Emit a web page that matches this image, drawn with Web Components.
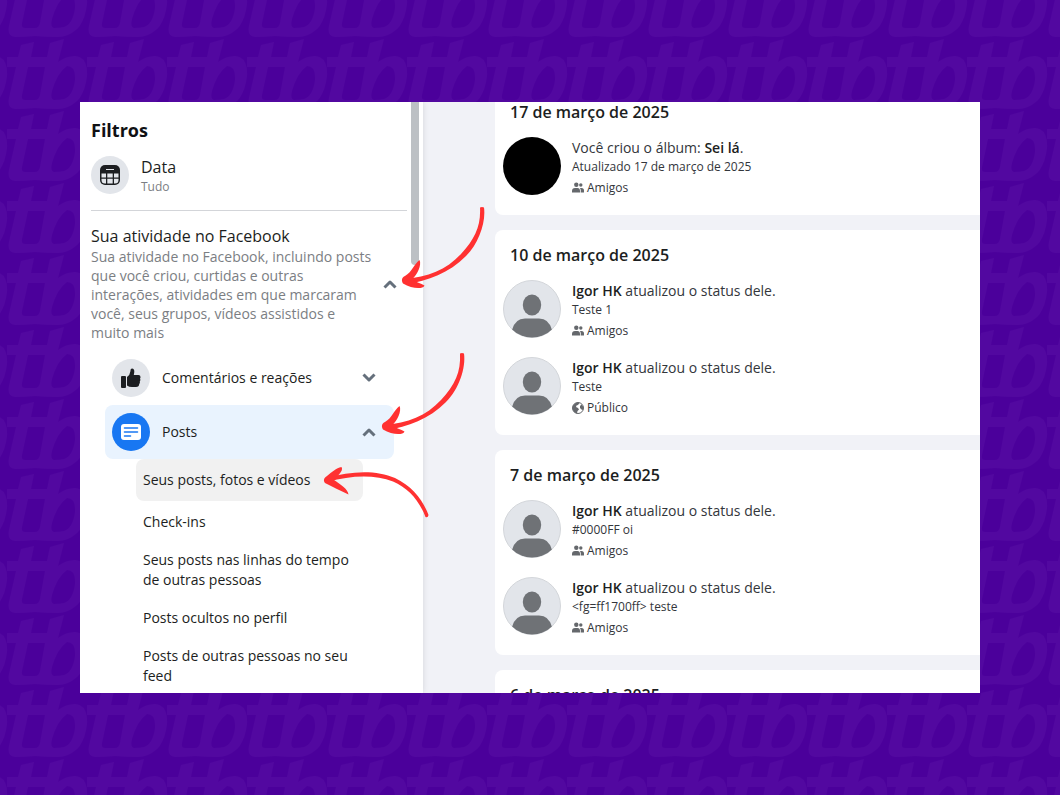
<!DOCTYPE html>
<html lang="pt-BR">
<head>
<meta charset="utf-8">
<meta name="viewport" content="width=device-width, initial-scale=1">
<title>Registro de atividades</title>
<style>
  html, body { margin: 0; height: 100%; }
  body { font-family: "Open Sans", "Noto Sans", sans-serif; color: #1c1e21; background: #4b009b; overflow: hidden; }
</style>
</head>
<body>
<brand-backdrop>
  <activity-window>
    <filter-sidebar slot="side">
      <date-filter label="Data" value="Tudo"></date-filter>
      <filter-section heading="Sua atividade no Facebook" slot="section">
        Sua atividade no Facebook, incluindo posts que você criou, curtidas e outras interações, atividades em que marcaram você, seus grupos, vídeos assistidos e muito mais
      </filter-section>
      <filter-group icon="like" slot="groups">Comentários e reações</filter-group>
      <filter-group icon="post" open slot="groups">Posts</filter-group>
      <filter-link current slot="links">Seus posts, fotos e vídeos</filter-link>
      <filter-link slot="links">Check-ins</filter-link>
      <filter-link slot="links">Seus posts nas linhas do tempo de outras pessoas</filter-link>
      <filter-link slot="links">Posts ocultos no perfil</filter-link>
      <filter-link slot="links">Posts de outras pessoas no seu feed</filter-link>
    </filter-sidebar>
    <day-card heading="17 de março de 2025">
      <activity-item album audience="Amigos">Você criou o álbum: <b>Sei lá</b>.<span slot="detail">Atualizado 17 de março de 2025</span></activity-item>
    </day-card>
    <day-card heading="10 de março de 2025">
      <activity-item audience="Amigos"><b>Igor HK</b> atualizou o status dele.<span slot="detail">Teste 1</span></activity-item>
      <activity-item audience="Público"><b>Igor HK</b> atualizou o status dele.<span slot="detail">Teste</span></activity-item>
    </day-card>
    <day-card heading="7 de março de 2025">
      <activity-item audience="Amigos"><b>Igor HK</b> atualizou o status dele.<span slot="detail">#0000FF oi</span></activity-item>
      <activity-item audience="Amigos"><b>Igor HK</b> atualizou o status dele.<span slot="detail">&lt;fg=ff1700ff&gt; teste</span></activity-item>
    </day-card>
    <day-card heading="6 de março de 2025"></day-card>
    <guide-arrows slot="overlay"></guide-arrows>
  </activity-window>
</brand-backdrop>

<script>
  const define = (name, render) => customElements.define(name, class extends HTMLElement {
    constructor() {
      super();
      this.attachShadow({ mode: 'open' }).innerHTML = '<style>*{box-sizing:border-box}</style>' + render(this);
    }
  });

  const chevron = up => `<svg width="14" height="10" viewBox="0 0 14 10" fill="none" stroke="#65707c" stroke-width="3" stroke-linejoin="round" aria-hidden="true"><path d="${up ? 'M1.500 8.500 7 3l5.500 5.500' : 'M1.500 1.500 7 7l5.500-5.500'}"/></svg>`;

  define('brand-backdrop', () => `
    <style>
      :host { display: block; position: relative; height: 100vh; padding: 102px 80px; box-sizing: border-box; }
      .pattern { position: absolute; inset: 0; width: 100%; height: 100%; }
    </style>
    <svg class="pattern" aria-hidden="true">
      <defs>
        <path id="mark" fill="#5208a0" fill-rule="evenodd" d="M21 7 34 4 31 19H47L50 5 64 1 58 24Q66 18 75 18 88 19 87 38 85 55 77 63 68 71 58 71 45 71 35 70 25 71 15 71 7 70 9 60L16 29H7V19H18zM28 29 22 57Q21 62 25 62H35Q39 62 40 57L45 29zM67 28Q76 28 75 42 73 58 64 61 59 62 54 62 50 61 52 53 57 35 67 28z"/>
        <pattern id="tile" x="0" y="38" width="80" height="72" patternUnits="userSpaceOnUse">
          <use href="#mark" x="-80"/><use href="#mark"/>
        </pattern>
      </defs>
      <rect width="100%" height="100%" fill="url(#tile)"/>
    </svg>
    <slot></slot>`);

  define('activity-window', () => `
    <style>
      :host { display: flex; position: relative; height: 100%; overflow: hidden; background: #f1f2f7; }
      main { flex: 1; min-width: 0; padding-left: 72px; margin-top: -15px; display: flex; flex-direction: column; gap: 15px; }
    </style>
    <slot name="side"></slot>
    <main><slot></slot></main>
    <slot name="overlay"></slot>`);

  define('filter-sidebar', () => `
    <style>
      :host { flex: none; display: flex; width: 343px; background: #fff; box-shadow: 0 0 6px #0000001f; }
      .body { flex: 1; min-width: 0; padding: 16px 0 0 11px; }
      h1 { margin: 0 0 14px; font-size: 18px; line-height: 24px; font-weight: 700; color: #101114; }
      .groups { padding: 9px 13px 0 14px; }
      nav { padding: 0 44px 0 45px; }
      .thumb { flex: none; width: 8px; height: 163px; margin: 0 4px 0 4px; background: #bcc0c4; border-radius: 0 0 4px 4px; }
    </style>
    <div class="body">
      <h1>Filtros</h1>
      <slot></slot>
      <slot name="section"></slot>
      <div class="groups"><slot name="groups"></slot></div>
      <nav aria-label="Posts"><slot name="links"></slot></nav>
    </div>
    <div class="thumb"></div>`);

  define('date-filter', el => `
    <style>
      :host { display: block; border-bottom: 1px solid #d3d5d9; padding-bottom: 16px; }
      button { all: unset; display: flex; align-items: center; gap: 12px; cursor: pointer; }
      .disc { width: 38px; height: 38px; border-radius: 50%; background: #e2e5ea; display: grid; place-items: center; }
      .label { display: block; font-size: 16px; line-height: 22px; }
      .value { display: block; font-size: 12px; line-height: 18px; color: #7b7e83; }
      .text { height: 38px; }
    </style>
    <button type="button">
      <span class="disc"><svg width="20" height="20" viewBox="0 0 20 20" aria-hidden="true">
        <rect width="20" height="20" rx="5" fill="#1c1e21"/>
        <rect x="6" y="4" width="8" height="1" fill="#e2e5ea"/>
        <g fill="#e2e5ea"><path d="M1.500 8.500h4.500v4H1.500zM7.300 8.500h5.400v4H7.300zM14 8.500h4.500v4H14zM1.500 13.800H6v4.700H5q-3.500 0-3.500-3.500zM7.300 13.800h5.400v4.700H7.300zM14 13.800h4.500V15q0 3.500-3.500 3.500h-1z"/></g>
      </svg></span>
      <span class="text"><span class="label">${el.getAttribute('label')}</span><span class="value">${el.getAttribute('value')}</span></span>
    </button>`);

  define('filter-section', el => `
    <style>
      :host { display: flex; align-items: center; padding-top: 14px; }
      .text { flex: 1; min-width: 0; padding-right: 8px; }
      h2 { margin: 0; font-size: 16px; line-height: 22px; font-weight: 500; }
      p { margin: 0; font-size: 14px; line-height: 19px; color: #7b7e83; }
      button { all: unset; display: flex; margin-right: 10px; cursor: pointer; }
    </style>
    <div class="text"><h2>${el.getAttribute('heading')}</h2><p><slot></slot></p></div>
    <button type="button" aria-label="Recolher" aria-expanded="true">${chevron(true)}</button>`);

  const groupIcons = {
    like: `<svg width="20" height="20" viewBox="0 0 20 20" fill="#1c1e21" aria-hidden="true"><rect x="0" y="8" width="5" height="12" rx="1"/><path d="M6 9Q9 7 9.500 3V2Q9.600.500 11 .500 13.500.500 13.300 4L12.800 7H17.500Q19.500 7 19.500 9 19.500 10 19 10.500 20 12 18.800 13.500 19.300 15 18.200 16 18.200 19 15 19H11Q8 19 6 17.500z"/></svg>`,
    post: `<svg width="20" height="16" viewBox="0 0 20 16" aria-hidden="true"><rect width="20" height="16" rx="3" fill="#fff"/><path d="M3.500 4h13M3.500 8h13M3.500 12h6" stroke="#1877f2" stroke-width="1.600" stroke-linecap="round"/></svg>`
  };
  define('filter-group', el => `
    <style>
      :host { display: block; border-radius: 8px; }
      :host([open]) { background: #e9f3fe; }
      button { all: unset; box-sizing: border-box; width: 100%; height: 54px; padding: 0 18px 0 7px; display: flex; align-items: center; gap: 12px; font-size: 14px; line-height: 20px; cursor: pointer; }
      .disc { flex: none; width: 38px; height: 38px; border-radius: 50%; background: #e2e5ea; display: grid; place-items: center; }
      :host([open]) .disc { background: #1877f2; }
      .label { flex: 1; }
    </style>
    <button type="button" aria-expanded="${el.hasAttribute('open')}"><span class="disc">${groupIcons[el.getAttribute('icon')]}</span><span class="label"><slot></slot></span>${chevron(el.hasAttribute('open'))}</button>`);

  define('filter-link', () => `
    <style>
      :host { display: block; border-radius: 8px; }
      a { display: block; padding: 9px 7px; font-size: 14px; line-height: 20px; color: inherit; text-decoration: none; }
      :host([current]) { background: #f1f1f1; margin-bottom: 2px; }
      :host([current]) a { padding: 11px 7px; }
    </style>
    <a href="#"><slot></slot></a>`);

  define('day-card', el => `
    <style>
      :host { display: block; flex: none; background: #fff; border-radius: 8px 0 0 8px; padding: 13px 0 10px 8px; }
      h2 { margin: 0 7px 4px; font-size: 16px; line-height: 24px; font-weight: 600; }
    </style>
    <h2>${el.getAttribute('heading')}</h2><slot></slot>`);

  const person = `<svg width="58" height="58" viewBox="0 0 58 58" aria-hidden="true"><defs><clipPath id="c"><circle cx="29" cy="29" r="28.500"/></clipPath></defs><circle cx="29" cy="29" r="28.500" fill="#e2e5ea" stroke="#d3d6da"/><g clip-path="url(#c)" fill="#6f7276"><ellipse cx="29" cy="25" rx="9.200" ry="10.500"/><path d="M9 60V50Q12 38.500 22 38.500H36Q46 38.500 49 50V60z"/></g></svg>`;
  const album = `<svg width="58" height="58" viewBox="0 0 58 58" aria-hidden="true"><circle cx="29" cy="29" r="29"/></svg>`;
  const audiences = {
    Amigos: `<svg width="12" height="12" viewBox="0 0 12 12" fill="#65686c" aria-hidden="true"><circle cx="4.300" cy="2.800" r="2.200"/><circle cx="8.800" cy="3" r="1.700"/><path d="M0 10.500V9Q0 6 3 6H5.500Q8 6 8 9V10.500zM8.700 10.500H12V8.500Q12 6 9.500 6H8Q9.200 7.500 8.700 10.500z"/></svg>`,
    'Público': `<svg width="12" height="12" viewBox="0 0 12 12" aria-hidden="true"><circle cx="6" cy="6" r="5.500" fill="#fff" stroke="#65686c"/><path d="M1 3.500Q3 .500 6 .500L7.500 1 6 3 4.500 3.500 4 5 6 6 7 7.500 5.500 9 5 11.500Q1 10.500.500 6zM8 4 9.500 2.500 11.500 5 11 8 9.500 7.500 8 6z" fill="#65686c"/></svg>`
  };
  define('activity-item', el => `
    <style>
      :host { display: flex; gap: 11px; height: 77px; padding-top: 9px; box-sizing: border-box; }
      svg { flex: none; display: block; }
      .text { padding-top: 1px; }
      .title { font-size: 14px; line-height: 20px; color: #33363b; }
      .detail, .audience { font-size: 12px; line-height: 18px; color: #33363b; }
      .audience { display: flex; align-items: center; gap: 3px; margin-top: 3px; }
      ::slotted(b) { font-weight: 600; color: #1c1e21; }
    </style>
    ${el.hasAttribute('album') ? album : person}
    <div class="text">
      <div class="title"><slot></slot></div>
      <div class="detail"><slot name="detail"></slot></div>
      <div class="audience">${audiences[el.getAttribute('audience')]}<span>${el.getAttribute('audience')}</span></div>
    </div>`);

  define('guide-arrows', () => `
    <style>
      :host { position: absolute; left: 0; top: 0; pointer-events: none; }
      svg { display: block; }
    </style>
    <svg width="420" height="430" viewBox="80 102 420 430" fill="#ff3131" aria-hidden="true">
      <g id="down">
        <path d="M480 207.500Q482 206.500 484 207.500C486 222 479 243 466 256 449 273 428 281 406 284L404 279C428 277 446 270 461 254 475 239 481 226 480 207.500z"/>
        <path d="M419.500 260C422 265 417 275 412 279.500 416 282.500 421 283 424.500 285.500 423 289.500 412 289 403 283.500 401 280 402 277.500 405 276 412 272 414 264 419.500 260z"/>
      </g>
      <use href="#down" x="-20" y="146"/>
      <path d="M428.500 515Q428 518 425.500 517C419 500 408 488 393 481.500 375 474.500 351 475 328 482L327 478C350 471 376 469.500 395 478 412 486 423 500 428.500 515z"/>
      <path d="M341.500 467C344 471 337 476 334 480 340 484 348 489 348.500 494.500 341 491 333 487 325 483 323 480 324 478 327 476 332 472 336 468 341.500 467z"/>
    </svg>`);
</script>
</body>
</html>
